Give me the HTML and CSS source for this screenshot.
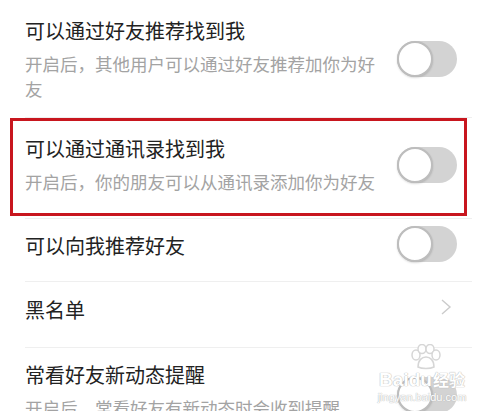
FILE: index.html
```html
<!DOCTYPE html>
<html lang="zh-CN">
<head>
    <meta charset="UTF-8">
    <meta name="viewport" content="width=device-width, initial-scale=1.0">
    <title>隐私设置</title>
    <link rel="stylesheet" href="styles.css">
</head>
<body>
    <div class="settings">
        <div class="row row-first">
            <div class="text">
                <div class="title">可以通过好友推荐找到我</div>
                <div class="desc">开启后，其他用户可以通过好友推荐加你为好友</div>
            </div>
            <div class="switch"><span class="knob"></span></div>
        </div>

        <div class="row row-marked">
            <div class="text">
                <div class="title">可以通过通讯录找到我</div>
                <div class="desc">开启后，你的朋友可以从通讯录添加你为好友</div>
            </div>
            <div class="switch"><span class="knob"></span></div>
            <div class="mark"></div>
        </div>

        <div class="row row-single">
            <div class="text">
                <div class="title">可以向我推荐好友</div>
            </div>
            <div class="switch"><span class="knob"></span></div>
        </div>

        <div class="row row-link">
            <div class="text">
                <div class="title">黑名单</div>
            </div>
            <svg class="chevron" width="12" height="16" viewBox="0 0 12 16">
                <polyline points="2,1 10,8 2,15" fill="none" stroke="#cbcbcb" stroke-width="1.4"/>
            </svg>
        </div>

        <div class="row row-last">
            <div class="text">
                <div class="title">常看好友新动态提醒</div>
                <div class="desc">开启后，常看好友有新动态时会收到提醒</div>
            </div>
            <div class="switch"><span class="knob"></span></div>
        </div>
    </div>

    <div class="watermark">
        <svg class="paw" width="34" height="26" viewBox="0 0 34 26">
            <g fill="rgba(255,255,255,0.85)" stroke="#d6d6d6" stroke-width="1.5">
                <ellipse cx="7" cy="11" rx="4" ry="5"/>
                <ellipse cx="13" cy="5" rx="4" ry="4.5"/>
                <ellipse cx="21" cy="5" rx="4" ry="4.5"/>
                <ellipse cx="27" cy="11" rx="4" ry="5"/>
                <path d="M9 23 C9 16 13 13 17 13 C21 13 25 16 25 23 C21 25 13 25 9 23 Z"/>
            </g>
        </svg>
        <div class="brand">Baidu<span class="brand-cn">经验</span></div>
        <div class="site">jingyan.baidu.com</div>
    </div>
</body>
</html>
```

FILE: styles.css
```css
html{
    overflow: hidden;
}
body{
    margin: 0;
    background-color: #fff;
    font-family: "Noto Sans CJK SC", "Noto Sans", sans-serif;
    position: relative;
    height: 411px;
}
.settings{
    display: flex;
    flex-direction: column;
}
.row{
    display: flex;
    align-items: center;
    margin: 0 22px 0 25px;
    border-bottom: 1px solid #efefef;
}
.row-first{
    padding: 17px 0 16px;
}
.row-marked{
    position: relative;
    padding: 17px 0 24px;
}
.row-single{
    padding: 11px 0 19px;
}
.row-link{
    padding: 14px 0 23px;
}
.row-last{
    padding: 13px 0 0;
    border-bottom: none;
}
.text{
    flex: 1;
    padding-right: 15px;
    min-width: 0;
}
.title{
    font-size: 20px;
    line-height: 28px;
    color: #222;
}
.desc{
    margin-top: 6px;
    font-size: 17.5px;
    line-height: 25px;
    color: #a3a3a3;
}
.switch{
    width: 60px;
    height: 36px;
    margin-right: 15px;
    border-radius: 18px;
    background-color: #d3d3d3;
    flex-shrink: 0;
    display: flex;
    align-items: center;
}
.knob{
    width: 32px;
    height: 32px;
    border-radius: 50%;
    background-color: #fff;
    border: 2px solid #bdbdbd;
    box-shadow: 0 1px 2px rgba(0,0,0,0.15);
}
.row-single .switch{
    margin-top: -4px;
}
.row-last .switch{
    margin-top: 8px;
}
.chevron{
    margin-right: 20px;
    margin-top: -6px;
}
.mark{
    position: absolute;
    left: -15px;
    right: 5px;
    top: 0;
    bottom: 2px;
    border: 3px solid #c8161e;
}

/* site watermark over the last switch */
.watermark{
    position: absolute;
    left: 376px;
    top: 344px;
    width: 92px;
    display: flex;
    flex-direction: column;
    align-items: center;
    font-family: "Liberation Sans", Arial, sans-serif;
    color: #fff;
}
.paw{
    margin-left: 8px;
}
.brand{
    font-size: 19px;
    line-height: 18px;
    font-weight: bold;
    white-space: nowrap;
    text-shadow: 0 0 1px #b5b5b5, 0 0 1px #b5b5b5;
}
.brand-cn{
    font-family: "Noto Sans CJK SC", sans-serif;
    font-size: 16px;
    margin-left: 1px;
}
.site{
    font-size: 11px;
    line-height: 13px;
    margin-top: 2px;
    white-space: nowrap;
    text-shadow: 0 0 1px #b5b5b5, 0 0 1px #b5b5b5;
}
```
